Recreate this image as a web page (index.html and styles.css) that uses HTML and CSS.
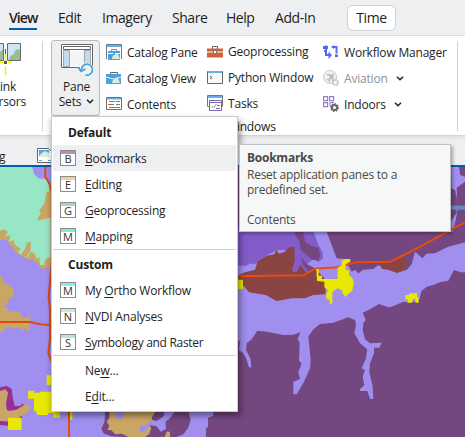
FILE: index.html
```html
<!DOCTYPE html>
<html lang="en">
<head>
<meta charset="utf-8">
<title>Pane Sets</title>
<link rel="stylesheet" href="styles.css">
</head>
<body>
<div class="app">
  <nav class="tabs">
    <span class="tab t-view active">View</span><span class="tab t-edit">Edit</span><span class="tab t-imagery">Imagery</span><span class="tab t-share">Share</span><span class="tab t-help">Help</span><span class="tab t-addin">Add-In</span><span class="tab t-time">Time</span>
  </nav>
  <section class="ribbon">
    <div class="link-group">
      <svg width="22" height="36" viewBox="0 0 22 36"><path fill="#cde6f7" stroke="#6b6b6b" d="M-5 3.500H3.500V20.500H-5zM7.500 3.500H20.500V20.500H7.500z"/><path fill="#96bd96" d="M20 10c-3-2-6 1-6 4-3 1-5 3-5 6h11zM0 12l3-3v11H0z"/><path stroke="#fff" stroke-width="3" d="M5.500 8V35M0 23.500h12"/><path stroke="#f5ef00" stroke-width="1.500" d="M5.500 14v7M5.500 26v9M0 22.500h3M8 22.500h4"/><path stroke="#555" stroke-width="1" d="M5.500 9v5"/><path fill="#555" d="M4 21h3v3H4z"/></svg>
      <div class="link-label">Link<br>Cursors</div>
    </div>
    <div class="divider"></div>
    <div class="pane-sets">
      <svg width="34" height="34" viewBox="0 0 34 34"><path fill="#fff" stroke="#666" d="M2.500 2.500h31v23h-31z"/><path fill="#fff" stroke="#666" d="M4.500 4.500h27v3h-27z"/><path fill="#bfdcf0" stroke="#777" stroke-width=".6" d="M4.500 8.500h6v16h-6zM25.500 8.500h6v16h-6z"/><path fill="#f4f4f4" d="M11 9h14v15H11z"/><circle cx="27.500" cy="27.500" r="7" fill="#f0f1f3"/><path fill="none" stroke="#4aa0d8" stroke-width="1.700" d="M22.500 28a5.500 5.500 0 1 1 4 5M19 25l3 4.500 4.500-2.500"/></svg>
      <span>Pane</span>
      <span class="ps-second">Sets <svg class="chev" width="8" height="5" viewBox="0 0 8 5"><path d="M1 .8 4 3.800 7 .8"/></svg></span>
    </div>
    <div class="commands">
      <div class="col c1">
        <div class="cmd"><svg width="16" height="16" viewBox="0 0 16 16"><path fill="#fff" stroke="#777" d="M.5 15V.5h15V15"/><path fill="#62b1e4" d="M1 1h14v2H1z"/><path fill="none" stroke="#4aa3dc" d="M5.500 7V5.500h5V7"/><path fill="#4aa3dc" d="M2 7h12v9H2z"/><path fill="#fff" d="M2 9h5v1H2zM9 9h5v1H9z"/><path fill="#dceeda" d="M6 15c0-3 2-5 6-5l2 5z"/></svg><span>Catalog Pane</span></div>
        <div class="cmd"><svg width="16" height="16" viewBox="0 0 16 16"><path fill="none" stroke="#666" d="M4.500 4.500v-2h7v2"/><path fill="#4aa3dc" d="M0 4h15v10H0z"/><path fill="#e6f4fd" d="M0 6.500l7 2 8-2v1l-8 2-7-2z"/><path fill="#dceeda" d="M6 13c0-3 3-5 6-5l2 5z"/></svg><span>Catalog View</span></div>
        <div class="cmd"><svg width="16" height="14" viewBox="0 0 16 14"><path fill="#fff" stroke="#707070" d="M.5.5h15v12H.5z"/><path fill="#62b1e4" d="M1 1h14v1.500H1z"/><path stroke="#777" d="M3 4.500h5M10 4.500h4M5 7.500h3M10 7.500h4M3 10.500h5M10 10.500h4"/><path stroke="#dd5a3a" d="M7 4.500h2M2 7.500h3M8 10.500h3"/></svg><span>Contents</span></div>
      </div>
      <div class="col c2">
        <div class="cmd"><svg width="16" height="14" viewBox="0 0 16 14"><path fill="none" stroke="#666" d="M5.500 4V1.500h5V4"/><path fill="#c9623f" d="M0 3.500h16v9H0z"/><path fill="#fff" d="M0 6.500h16v1H0z"/><path fill="#fff" stroke="#777" d="M6.500 5.500h3v3h-3z"/></svg><span>Geoprocessing</span></div>
        <div class="cmd"><svg width="16" height="14" viewBox="0 0 16 14"><path fill="#f8f8f8" stroke="#666" d="M.5.500h15v12H.5z"/><path fill="#62b1e4" d="M1 0h14v2H1z"/><path fill="none" stroke="#555" d="M3 5l2 1.500L3 8"/></svg><span>Python Window</span></div>
        <div class="cmd"><svg width="16" height="16" viewBox="0 0 16 16"><path fill="#fff" stroke="#777" d="M.5.5h15v11H.5z"/><path fill="#62b1e4" d="M1 1h14v2H1z"/><path fill="#fff" stroke="#7b62b0" d="M2.500 5.500h12v10h-12zM2 7.500h12"/><path fill="none" stroke="#7fae52" d="M4.500 11l2 2 3-4"/><path stroke="#7b62b0" d="M10 10.500h3M9 13.500h4"/></svg><span>Tasks</span></div>
        <div class="group-label">Windows</div>
      </div>
      <div class="col c3">
        <div class="cmd"><svg width="16" height="16" viewBox="0 0 16 16"><path fill="none" stroke="#5468f5" stroke-width="2" d="M3 1.500v9.500H8M9.500 3h4v6.500"/><path fill="#5468f5" d="M0 2h5v3H0zM5.500 7.500 9 11l-3.500 4zM11 1v4L8 3zM1 6h3v2H1zM12 10.500h3v2.500h-3z"/></svg><span>Workflow Manager</span></div>
        <div class="cmd disabled"><svg width="16" height="16" viewBox="0 0 16 16"><circle cx="7" cy="7" r="6.500" fill="#f1f1f1" stroke="#c8c8c8"/><path fill="#bdbdbd" d="M11 3 8.500 4.500 4 4 3.500 5 7 6.500 5.500 9 3.500 9v1l2 .5.500 2 1-.5V10l2-1.500L9.500 12l1-.5V6.500z"/><circle cx="12.500" cy="12.500" r="2.500" fill="#fff" stroke="#b5b5b5" stroke-width="2" stroke-dasharray="1.200 .7"/></svg><span>Aviation</span><svg class="chev" width="8" height="5" viewBox="0 0 8 5"><path d="M1 .8 4 3.800 7 .8"/></svg></div>
        <div class="cmd"><svg width="16" height="16" viewBox="0 0 16 16"><path fill="#fff" stroke="#9480c0" stroke-width="1.200" d="M.6.6h4v4h-4zM6.600.6h4v4h-4zM.6 6.600h4v4h-4z"/><path stroke="#9480c0" fill="none" d="M7 10V6.500h4"/><circle cx="11.500" cy="11.500" r="2.600" fill="#fff" stroke="#666" stroke-width="2"/><circle cx="11.500" cy="11.500" r="3.900" fill="none" stroke="#666" stroke-width="1.300" stroke-dasharray="1.500 1.500"/></svg><span>Indoors</span><svg class="chev" width="8" height="5" viewBox="0 0 8 5"><path d="M1 .8 4 3.800 7 .8"/></svg></div>
      </div>
    </div>
    <div class="divider"></div>
  </section>
  <div class="view-tabs"><span>g</span><svg width="16" height="16" viewBox="0 0 16 16"><path fill="#fff" stroke="#666" d="M.5.500h11l4 4v10H.5z"/><path fill="#52a8df" d="M2 2h10v7H2z"/><path fill="#dceeda" d="M2 9c2-5 4-4 6-6l4 2v4z"/><path stroke="#52a8df" d="M2 12.500h3M11 12.500h3"/></svg></div>
  <div class="map">
    <svg width="465" height="270" viewBox="0 167 465 270">
      <path fill="#a18ff0" d="M0 167h465v270H0z"/>
      <g transform="translate(0 160) scale(.33333)">
        <path fill="#c9a663" d="M0 205H160V315L128 328 100 300 75 295 50 280 15 235 0 230z"/>
        <path fill="#c9a663" d="M0 345 12 357 10 369 26 372 30 380 38 382 42 395 38 410 24 420 26 430 10 440 24 447 28 455 56 453 62 462 68 474 82 474 88 460 90 510 78 512 72 503 64 514 58 502 36 506 24 498 5 518 0 515z"/>
        <path fill="#97e6c6" d="M0 21H96L103 43 115 55 138 58 148 75V92H160V293L148 292 136 298 132 316 120 314 118 292 110 298 104 280 92 275 85 290 75 289 58 282 54 272 64 268 46 255 40 240 26 246 30 232 26 224 14 230 0 218z"/>
        <path fill="#c9a663" d="M160 88 138 98 134 128 118 152 122 160 110 182 160 172zM44 214 22 236 12 232 24 216 12 208 0 212V240H20zM92 243 80 250 76 264 62 288H82L92 270z"/>
        <path fill="#993091" d="M0 682 20 678 35 686 38 710 44 738 60 738 66 732 80 736 58 750 22 752 17 740 20 700 0 693zM0 783 24 785V797L0 795zM58 766h8v12h-8z"/>
        <path fill="#c9a663" d="M0 693 17 688 24 698 18 730 20 750 30 755 52 748 76 732 86 734 90 746 80 760 60 770 24 780 0 783z"/>
        <path fill="#e8e800" d="M24 773h41v37H24zM84 692h18v6h38v-52h20v118h-50v-10h-8v-38H84z"/>
        <path fill="none" stroke="#df4b0a" stroke-width="6" d="M136 20V50L148 70 155 100V310L146 410 150 450V535L145 580 155 605M0 486H90L120 493 153 495"/>
      </g>
      <g transform="translate(235 135) scale(.33333)">
        <path fill="#754780" d="M0 96H690V322L640 335 600 355 575 356 562 370 540 350 530 388 515 405 482 412 460 404 448 402 430 390 415 402 385 404 370 415 360 405 350 410 330 372 305 370 275 290H0z"/>
        <path fill="#a18ff0" d="M648 96H672L676 120 690 125V140L665 158 668 225 655 290H645L650 170z"/>
        <path fill="#754780" d="M646 160 660 165 668 200 664 235 646 262z"/>
        <path fill="#688acb" d="M645 212h45v12h-45z"/><path stroke="#555478" stroke-width="3" d="M645 206h45M645 232h45"/>
        <path fill="#a18ff0" d="M205 285H275L280 340 298 360 302 402H262L250 385 150 430 60 440 0 420V388L110 370 190 330z"/>
        <path fill="#835cc9" d="M0 280H232L248 325 262 350 264 370 250 382 235 372 200 400 160 370 150 345 125 345 75 372 62 386 45 386 32 393 0 390z"/>
        <path fill="#754780" d="M184 286H207L205 300 212 322 228 332 250 338 256 362 250 376 232 374 212 358 196 344 194 320 180 300z"/>
        <path fill="#8a4444" d="M0 425 30 412 60 404 68 378 94 362 118 358 124 344 132 356 150 350 164 335 178 336 182 360 176 402 188 404 198 385 240 400 270 432 272 478 235 480 210 490 170 490 125 498 92 480 42 472 28 455 10 440z"/>
        <path fill="#8a4444" d="M436 374 446 366 458 382 480 378 490 368 506 370 518 388 504 408 486 414 462 404 440 402z"/>
        <path fill="#835cc9" d="M178 345 194 340 202 374 212 392 226 414 212 412 196 388 186 410 174 412 172 398 180 388z"/>
        <path fill="#754780" d="M198 366 216 388 240 400 226 416 204 390z"/>
        <path fill="none" stroke="#e84c0b" stroke-width="6" d="M0 424 206 421 240 401 308 397 362 382 467 380 550 338 690 262"/>
      </g>
      <path fill="#754780" transform="translate(230 300) scale(.33333)" d="M15 112 30 125 27 150 40 160 50 178 56 200 64 203 62 178 48 150 50 130 65 118 82 92 110 95 160 105 190 104 212 97 203 116 209 130 207 182 215 190 205 217 210 237 190 245V283H200L222 245 240 205 242 180 235 110 250 88 270 72 310 68 355 52 375 60 378 75 373 100 390 130 412 148 408 175 395 205 405 210 398 230 403 255 390 268V273H412L420 297H430L428 260 418 215 420 190 432 160V143H448L455 128 420 130 405 118 398 90 400 70 407 60 398 38 420 28 447 12 475 22 485 20 520 5 545 8 568 -2 574 -26 590 -40 612 -46 632 -54 655 -58 672 -90 690 -84 710 -82V530H-180V330H15z"/>
      <path fill="#e8e800" transform="translate(235 135) scale(.33333)" d="M244 402H251V422H261V432H308V398L320 390V378L330 372H346V380L332 388V404L342 406V420L352 430 356 442 352 468 340 476 332 486 322 474V466L308 460 292 470V506H284V494L274 492V474L280 468 268 456V440L246 438zM0 430H10V434H24V462H0zM522 475H546V487H551V503H541V491H535L530 503H518V493H511V480H522z"/>
      <g transform="translate(40 385) scale(.33333)">
        <path fill="#a18ff0" d="M0 0H555V80H520V92L504 98V126L498 130V160H0z"/>
        <path fill="#754780" d="M195 80H372V94L350 108 340 106 326 120 350 124 362 140 378 132 376 108 394 90 404 80H446L452 104 444 130 430 148 400 160H330L215 154 192 146 184 132 194 108z"/>
        <path fill="#c9a663" d="M208 80H346L334 100 340 108 328 120 334 130 328 146 316 156H265L246 146 226 148 214 136 202 134 208 122 200 110 208 98zM380 140H390V156H374z"/>
        <path fill="#a18ff0" d="M226 80H250V96L240 106 228 96zM300 122 320 120 332 106 344 110 362 104 374 88V80H404L390 100 368 116 362 128 348 120 330 120 318 136 304 144 298 136z"/>
        <path fill="#e8e800" d="M0 20H60V98H40V84H24V90H0zM86 80H97V104H86z"/>
        <path stroke="#e84c0b" stroke-width="6" d="M87 76V160"/>
      </g>
    </svg>
  </div>

  <div class="menu">
    <div class="head">Default</div>
    <div class="item hot"><i class="ic b">B</i><span><u>B</u>ookmarks</span></div>
    <div class="item"><i class="ic e">E</i><span><u>E</u>diting</span></div>
    <div class="item"><i class="ic g">G</i><span><u>G</u>eoprocessing</span></div>
    <div class="item"><i class="ic m">M</i><span><u>M</u>apping</span></div>
    <hr>
    <div class="head">Custom</div>
    <div class="item"><i class="ic o">M</i><span>My <u>O</u>rtho Workflow</span></div>
    <div class="item"><i class="ic n">N</i><span><u>N</u>VDI Analyses</span></div>
    <div class="item"><i class="ic s">S</i><span class="tight"><u>S</u>ymbology and Raster</span></div>
    <hr>
    <div class="item plain"><span>Ne<u>w</u>...</span></div>
    <div class="item plain"><span>E<u>d</u>it...</span></div>
  </div>
  <div class="tooltip">
    <b>Bookmarks</b>
    <p>Reset application panes to a<br>predefined set.</p>
    <p class="tip-foot">Contents</p>
  </div>
</div>
</body>
</html>
```
FILE: styles.css
```css
* { box-sizing: border-box; }
body { margin: 0; font: 12px/16px "Open Sans", "Noto Sans", sans-serif; letter-spacing: -0.2px; color: #1e1e1e; }
svg { display: block; flex: none; }
.app { position: relative; width: 465px; height: 437px; overflow: hidden; display: flex; flex-direction: column; background: #eeeff1; }

.tabs { display: flex; height: 36px; flex: none; padding-left: 9px; border-bottom: 1px solid #dcdde0; font-size: 14px; letter-spacing: -0.45px; }
.tab { padding-top: 10px; height: 30px; white-space: nowrap; flex: none; }
.active { font-weight: 600; border-bottom: 2px solid #005fa8; }
.t-view { width: 28px; margin-right: 21px; letter-spacing: -0.9px; }
.t-edit { width: 44px; }
.t-imagery { width: 70px; }
.t-share { width: 54px; }
.t-help { width: 49px; }
.t-addin { width: 72px; }
.t-time { width: 49px; height: 26px; margin-top: 5px; padding-top: 4px; text-align: center; background: #fff; border: 1px solid #d0d1d5; border-radius: 6px; }

.ribbon { display: flex; height: 100px; flex: none; background: #fff; border-bottom: 1px solid #d4d5d8; }
.link-group { width: 42px; padding-top: 4px; overflow: hidden; }
.link-label { width: 60px; margin: 3px 0 0 -25px; text-align: center; line-height: 15px; }
.divider { width: 1px; height: 90px; margin-top: 5px; background: #d2d3d6; }
.pane-sets { width: 49px; height: 76px; margin: 4px 0 0 8px; padding-top: 1px; display: flex; flex-direction: column; align-items: center; background: #eeeff1; border: 1px solid #b9bbc0; border-radius: 3px; line-height: 15px; flex: none; }
.pane-sets > svg { margin: 0 0 3px 0; }
.pane-sets > span { margin-left: 2px; }
.ps-second { display: flex; align-items: center; gap: 5px; }
.chev path { fill: none; stroke: #222; stroke-width: 1.5; }
.commands { display: flex; width: 357px; padding: 3px 0 0 6px; }
.col { display: flex; flex-direction: column; }
.c1 { width: 101px; }
.c2 { width: 116px; }
.cmd { display: flex; align-items: center; gap: 5px; height: 26px; white-space: nowrap; }
.cmd span { padding-top: 1px; }
.cmd .chev { margin-left: 3px; }
.disabled { color: #929292; }
.group-label { padding: 3px 0 0 19px; }

.view-tabs { display: flex; justify-content: flex-start; height: 31px; flex: none; padding-top: 12px; border-bottom: 2px solid #005fa8; background: linear-gradient(#dfe0e3, #eeeff1 4px); }
.view-tabs span { width: 37px; margin-left: -1px; padding-top: 1px; }
.view-tabs svg { margin-left: 1px; }
.map { flex: 1; }

.menu { position: absolute; left: 51px; top: 116px; width: 187px; height: 296px; padding: 2px 1px 0; background: #fff; border: 1px solid #c9cacd; box-shadow: 3px 4px 6px rgba(0,0,0,.35), -2px 2px 5px rgba(0,0,0,.12); }
.head { height: 26px; padding: 6px 0 0 15px; font-weight: 700; }
.item { display: flex; align-items: center; height: 26px; padding-left: 7px; gap: 9px; white-space: nowrap; }
.item span { padding-top: 1px; }
.hot { background: #eeeff1; }
.plain { padding-left: 32px; }
.tight { letter-spacing: -0.3px; }
.menu hr { height: 1px; margin: 0 0 1px; border: 0; background: #d0d1d4; }
.menu u { text-underline-offset: 2px; }
.ic { width: 16px; height: 16px; border: 1px solid #8c8c8c; border-top: 0; box-shadow: inset 0 1px #8c8c8c; font: normal 11px/12px "Open Sans", sans-serif; text-align: center; padding-top: 3px; letter-spacing: 0; background: linear-gradient(var(--c) 4px, #fff 4px); color: #333; }
.b { --c: #c48db0; } .e { --c: #f7cd98; } .g { --c: #a4d8c4; } .m { --c: #7cf0c0; }
.o { --c: #86eeee; } .n { --c: #cfe6cc; } .s { --c: #bfe0d8; }

.tooltip { position: absolute; left: 239px; top: 144px; width: 212px; height: 88px; padding: 4px 7px; background: #f6f8f7; border: 1px solid #bfc1c4; box-shadow: 2px 2px 3px rgba(0,0,0,.3); color: #4a4a4a; line-height: 15px; letter-spacing: -0.25px; white-space: nowrap; }
.tooltip b { display: block; line-height: 17px; }
.tooltip p { margin: 1px 0 0; }
.tooltip .tip-foot { margin-top: 15px; }
```
